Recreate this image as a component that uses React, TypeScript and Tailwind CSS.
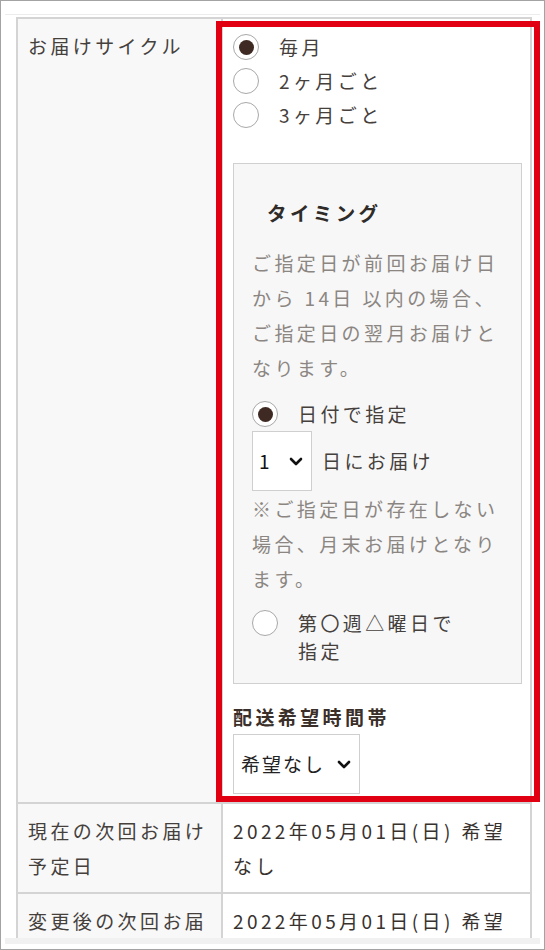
import React from 'react';

const Radio: React.FC<{ checked?: boolean }> = ({ checked }) => (
  <span className="w-[26px] h-[26px] shrink-0 rounded-full border-[1.5px] border-[#a8a8a8] bg-white flex items-center justify-center">
    {checked && <span className="w-[15px] h-[15px] rounded-full bg-[#3e2a22]" />}
  </span>
);

const Chevron: React.FC = () => (
  <svg width="14" height="9" viewBox="0 0 14 9" fill="none">
    <path d="M2 2l5 5 5-5" stroke="#111" strokeWidth="2.6" strokeLinecap="round" strokeLinejoin="round" />
  </svg>
);

const cycles = [
  { label: '毎月', checked: true },
  { label: '2ヶ月ごと', checked: false },
  { label: '3ヶ月ごと', checked: false },
];

const App: React.FC = () => {
  return (
    <div className="relative w-[545px] h-[950px] bg-white font-['Noto_Sans_CJK_JP','Noto_Sans',sans-serif] text-[19px] tracking-[3.4px] text-[#45403c]">
      <div className="w-full h-full border border-[#a3a3a3] px-[4px] pt-[13px] pb-[5px] flex flex-col overflow-hidden">
        <div className="flex-1 min-h-0 overflow-hidden border-t border-[#ececec] pl-[11px] pt-[2px]">
          <div className="w-[516px] grid grid-cols-[205px_309px] border-l-2 border-t-2 border-[#d4d4d4]">
            {/* お届けサイクル */}
            <div className="bg-[#f8f8f8] border-r-2 border-b-2 border-[#d4d4d4] pl-[10px] pr-[8px] pt-[9px] leading-[35px]">
              お届けサイクル
            </div>
            <div className="bg-white border-r-2 border-b-2 border-[#d4d4d4] pl-[10px] pr-[10px] pt-[11px] pb-[8px]">
              <div className="flex flex-col">
                {cycles.map((c) => (
                  <label key={c.label} className="flex items-center h-[34px]">
                    <Radio checked={c.checked} />
                    <span className="ml-[20px] leading-[34px]">{c.label}</span>
                  </label>
                ))}
              </div>

              <div className="mt-[31px] w-[289px] border border-[#d0d0d0] bg-[#f7f7f7] pl-[18px] pr-[16px] pt-[31px] pb-[18px]">
                <h3 className="pl-[15px] mb-[15px] leading-[35px] text-[19.5px] font-bold text-[#2f2b29]">タイミング</h3>
                <p className="leading-[35px] text-[#8b8682]">
                  ご指定日が前回お届け日から 14日 以内の場合、ご指定日の翌月お届けとなります。
                </p>
                <label className="mt-[12px] flex items-center h-[34px]">
                  <Radio checked />
                  <span className="ml-[20px]">日付で指定</span>
                </label>
                <div className="flex items-center">
                  <div className="w-[60px] h-[60px] border border-[#cfcfcf] bg-white flex items-center justify-between pl-[6px] pr-[8px] text-[#111] tracking-normal">
                    <span>1</span>
                    <Chevron />
                  </div>
                  <span className="ml-[10px]">日にお届け</span>
                </div>
                <p className="leading-[35px] text-[#8b8682]">
                  ※ご指定日が存在しない場合、月末お届けとなります。
                </p>
                <label className="mt-[13px] flex items-start">
                  <span className="pt-[1px]">
                    <Radio />
                  </span>
                  <span className="ml-[20px] leading-[28px] max-w-[176px]">第〇週△曜日で指定</span>
                </label>
              </div>

              <h4 className="mt-[15px] leading-[35px] font-bold text-[#3a2f29]">配送希望時間帯</h4>
              <div className="w-[127px] h-[60px] border border-[#cfcfcf] bg-white flex items-center justify-between pl-[7px] pr-[8px] text-[#222] tracking-[2px]">
                <span>希望なし</span>
                <Chevron />
              </div>
            </div>

            {/* 現在の次回お届け予定日 */}
            <div className="bg-[#f8f8f8] border-r-2 border-b-2 border-[#d4d4d4] pl-[10px] pr-[8px] pt-[9px] pb-[9px] leading-[35px]">
              現在の次回お届け予定日
            </div>
            <div className="bg-white border-r-2 border-b-2 border-[#d4d4d4] pl-[10px] pr-[10px] pt-[9px] pb-[9px] leading-[35px] text-[#38322f]">
              2022年05月01日(日) 希望なし
            </div>

            {/* 変更後の次回お届け予定日 */}
            <div className="bg-[#f8f8f8] border-r-2 border-b-2 border-[#d4d4d4] pl-[10px] pr-[8px] pt-[9px] pb-[9px] leading-[35px]">
              変更後の次回お届け予定日
            </div>
            <div className="bg-white border-r-2 border-b-2 border-[#d4d4d4] pl-[10px] pr-[10px] pt-[9px] pb-[9px] leading-[35px] text-[#38322f]">
              2022年05月01日(日) 希望なし
            </div>
          </div>
        </div>
        <div className="h-[6px] shrink-0 bg-[#f1f1f1]" />
      </div>

      {/* highlight frame */}
      <div className="absolute left-[216px] top-[21px] w-[324px] h-[781px] border-[6px] border-[#e00012] pointer-events-none" />
    </div>
  );
};

export default App;
